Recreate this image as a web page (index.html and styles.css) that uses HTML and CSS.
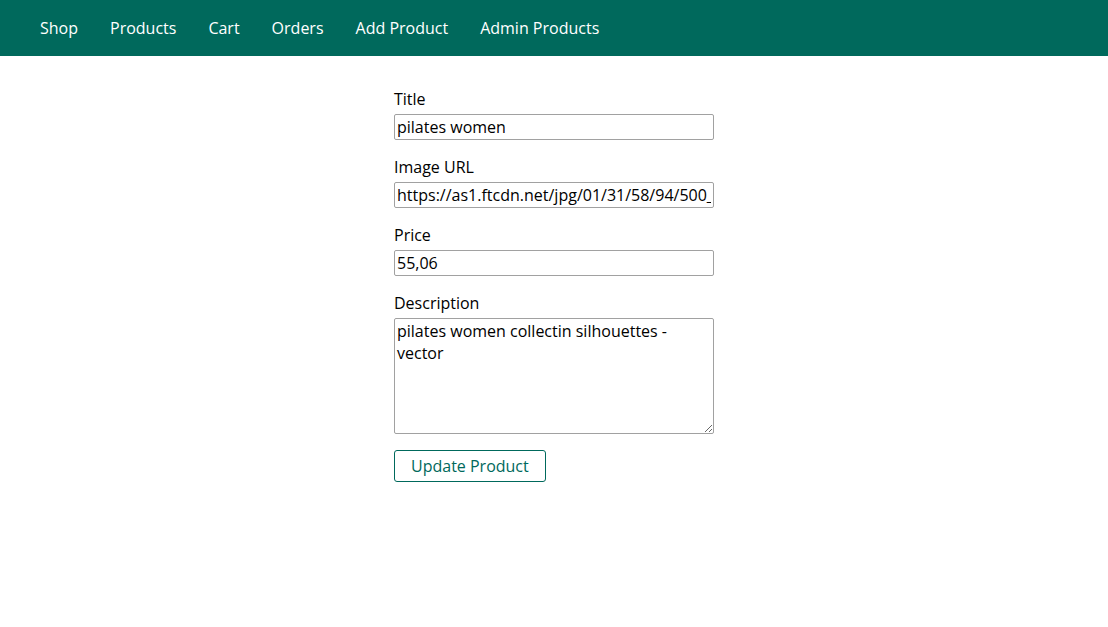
FILE: index.html
```html
<!DOCTYPE html>
<html lang="en">
<head>
<meta charset="UTF-8">
<title>Edit Product</title>
<link rel="stylesheet" href="styles.css">
</head>
<body>
<header class="main-header">
  <nav class="main-header__nav">
    <ul class="main-header__item-list">
      <li class="main-header__item"><a href="#">Shop</a></li>
      <li class="main-header__item"><a href="#">Products</a></li>
      <li class="main-header__item"><a href="#">Cart</a></li>
      <li class="main-header__item"><a href="#">Orders</a></li>
      <li class="main-header__item"><a href="#">Add Product</a></li>
      <li class="main-header__item"><a href="#">Admin Products</a></li>
    </ul>
  </nav>
</header>
<main class="main">
  <form class="product-form">
    <div class="form-control">
      <label for="title">Title</label>
      <input type="text" id="title" value="pilates women">
    </div>
    <div class="form-control">
      <label for="imageUrl">Image URL</label>
      <input type="text" id="imageUrl" value="https://as1.ftcdn.net/jpg/01/31/58/94/500_F_131589423_pilates.jpg">
    </div>
    <div class="form-control">
      <label for="price">Price</label>
      <input type="text" id="price" value="55,06">
    </div>
    <div class="form-control">
      <label for="description">Description</label>
      <textarea id="description" rows="5">pilates women collectin silhouettes - vector</textarea>
    </div>
    <button class="btn" type="button">Update Product</button>
  </form>
</main>
</body>
</html>
```

FILE: styles.css
```css
* {
  box-sizing: border-box;
}

body {
  margin: 0;
  padding: 0;
  font-family: "Open Sans", sans-serif;
  font-size: 16px;
  background: #ffffff;
}

.main-header {
  width: 100%;
  height: 3.5rem;
  background-color: #00695c;
  padding: 0 1.5rem;
  display: flex;
  align-items: center;
}

.main-header__nav {
  height: 100%;
  display: flex;
  align-items: center;
}

.main-header__item-list {
  list-style: none;
  margin: 0;
  padding: 0;
  display: flex;
}

.main-header__item {
  margin: 0 1rem;
  padding: 0;
}

.main-header__item a {
  text-decoration: none;
  color: #ffffff;
}

.main {
  padding: 1rem;
}

.product-form {
  width: 20rem;
  max-width: 90%;
  margin: auto;
  display: block;
}

.form-control {
  margin: 1rem 0;
}

.form-control label {
  display: block;
  width: 100%;
  margin-bottom: 0.25rem;
}

.form-control input,
.form-control textarea {
  display: block;
  width: 100%;
  border: 1px solid #a1a1a1;
  border-radius: 2px;
  font: inherit;
  color: #000000;
  padding: 1px 2px;
  margin: 0;
}

.form-control textarea {
  resize: vertical;
  padding: 1px 2px 3px;
}

.btn {
  font: inherit;
  border: 1px solid #00695c;
  color: #00695c;
  background: #ffffff;
  border-radius: 3px;
  cursor: pointer;
  padding: 0.25rem 1rem;
}
```
